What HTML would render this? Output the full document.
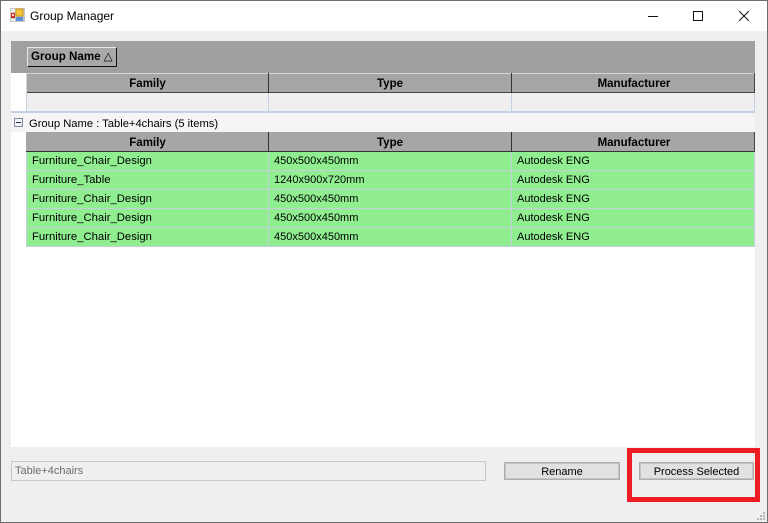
<!DOCTYPE html>
<html><head><meta charset="utf-8"><style>
html,body{margin:0;padding:0;width:768px;height:523px;overflow:hidden;background:#efefef}
*{box-sizing:border-box}
div,svg{position:absolute}
.t{font-family:"Liberation Sans",sans-serif;font-size:11px;color:#000;white-space:nowrap;line-height:18px}
.f{font-size:11.3px}
.h{font-weight:bold;font-size:11.5px;text-align:center;line-height:20px;color:#000}
.b{background:#e1e1e1;border:1px solid #adadad;box-shadow:inset 0 0 0 1px #c4c4c4;text-align:center;line-height:16px;padding-top:1px;font-family:"Liberation Sans",sans-serif;font-size:11px;color:#000}
</style></head><body>
<div style="left:0;top:0;width:768px;height:523px;background:#efefef"></div>
<div style="left:1px;top:1px;width:766px;height:30px;background:#fff"></div>
<svg style="left:10px;top:8px" width="15" height="15" viewBox="0 0 15 15">
<rect x="0" y="0" width="15" height="14" fill="#c9c9c9"/>
<rect x="1" y="1" width="4" height="3" fill="#eeeeee"/>
<rect x="1" y="5" width="4" height="5" fill="#c8322a"/><rect x="2" y="6" width="2" height="2" fill="#f3d6c8"/>
<rect x="1" y="11" width="4" height="2" fill="#eeeeee"/>
<rect x="6" y="1" width="7" height="7" fill="#f5c33b" stroke="#c99a20" stroke-width="1"/>
<rect x="6" y="9" width="7" height="4" fill="#5b8fd6"/>
</svg>
<div class="t" style="left:30px;top:7px;font-size:12px">Group Manager</div>
<svg style="left:640px;top:1px" width="125" height="30" viewBox="0 0 125 30" fill="none" stroke="#111" stroke-width="1">
<path d="M8 15.5H18"/><rect x="53.5" y="10.5" width="9" height="9"/><path d="M99 10L109 20M109 10L99 20"/>
</svg>
<!-- grid -->
<div style="left:11px;top:41px;width:744px;height:406px;background:#fff"></div>
<div style="left:11px;top:41px;width:744px;height:32px;background:#a0a0a0"></div>
<div class="t" style="left:27px;top:47px;width:90px;height:20px;background:#a8a8a8;border:1px solid;border-color:#e8e8e8 #111 #111 #e8e8e8;font-weight:bold;font-size:11.6px;line-height:18px;padding-left:3px">Group Name <span style="font-weight:normal">△</span></div>
<!-- header 1 -->
<div style="left:26px;top:73px;width:729px;height:20px;background:#a6a6a6;border-top:1px solid #d6d6d6;border-bottom:1px solid #444"></div>
<div style="left:26px;top:73px;width:1px;height:20px;background:#d6d6d6"></div>
<div style="left:268px;top:73px;width:1px;height:20px;background:#333"></div>
<div style="left:511px;top:73px;width:1px;height:20px;background:#333"></div>
<div style="left:754px;top:73px;width:1px;height:20px;background:#444"></div>
<div class="t h" style="left:27px;top:74px;width:241px">Family</div>
<div class="t h" style="left:269px;top:74px;width:242px">Type</div>
<div class="t h" style="left:513px;top:74px;width:242px">Manufacturer</div>
<!-- filter -->
<div style="left:26px;top:93px;width:729px;height:18px;background:#efefef"></div>
<div style="left:26px;top:93px;width:1px;height:18px;background:#c3d1e2"></div>
<div style="left:268px;top:93px;width:1px;height:18px;background:#c3d1e2"></div>
<div style="left:511px;top:93px;width:1px;height:18px;background:#c3d1e2"></div>
<div style="left:754px;top:93px;width:1px;height:18px;background:#c3d1e2"></div>
<div style="left:11px;top:111px;width:744px;height:2px;background:#c3d1e2"></div>
<!-- group row -->
<div style="left:11px;top:113px;width:744px;height:19px;background:#f5f5f5"></div>
<svg style="left:14px;top:118px" width="10" height="10" viewBox="0 0 10 10"><rect x=".5" y=".5" width="8" height="8" fill="#f3f3f3" stroke="#7f8a9c"/><path d="M2 4.5H7" stroke="#20304a"/></svg>
<div class="t" style="left:29px;top:114px;line-height:18px;font-size:11.2px;top:115px">Group Name : Table+4chairs (5 items)</div>
<!-- header 2 -->
<div style="left:26px;top:132px;width:729px;height:20px;background:#a6a6a6;border-bottom:1px solid #333"></div>
<div style="left:268px;top:132px;width:1px;height:20px;background:#333"></div>
<div style="left:511px;top:132px;width:1px;height:20px;background:#333"></div>
<div style="left:754px;top:132px;width:1px;height:20px;background:#444"></div>
<div class="t h" style="left:27px;top:133px;width:241px">Family</div>
<div class="t h" style="left:269px;top:133px;width:242px">Type</div>
<div class="t h" style="left:513px;top:133px;width:242px">Manufacturer</div>
<!-- rows -->
<div style="left:26px;top:152px;width:729px;height:95px;background:#90ee90;border-bottom:1px solid #c3cfdc"></div>
<div style="left:26px;top:170px;width:729px;height:1px;background:#c6cfdc"></div>
<div style="left:26px;top:189px;width:729px;height:1px;background:#c6cfdc"></div>
<div style="left:26px;top:208px;width:729px;height:1px;background:#c6cfdc"></div>
<div style="left:26px;top:227px;width:729px;height:1px;background:#c6cfdc"></div>
<div style="left:26px;top:152px;width:1px;height:95px;background:#c6cfdc"></div>
<div style="left:268px;top:152px;width:1px;height:95px;background:#c6cfdc"></div>
<div style="left:511px;top:152px;width:1px;height:95px;background:#c6cfdc"></div>
<div style="left:754px;top:152px;width:1px;height:95px;background:#c6cfdc"></div>
<div class="t f" style="left:32px;top:152px">Furniture_Chair_Design</div><div class="t" style="left:274px;top:152px">450x500x450mm</div><div class="t" style="left:517px;top:152px">Autodesk ENG</div>
<div class="t f" style="left:32px;top:171px">Furniture_Table</div><div class="t" style="left:274px;top:171px">1240x900x720mm</div><div class="t" style="left:517px;top:171px">Autodesk ENG</div>
<div class="t f" style="left:32px;top:190px">Furniture_Chair_Design</div><div class="t" style="left:274px;top:190px">450x500x450mm</div><div class="t" style="left:517px;top:190px">Autodesk ENG</div>
<div class="t f" style="left:32px;top:209px">Furniture_Chair_Design</div><div class="t" style="left:274px;top:209px">450x500x450mm</div><div class="t" style="left:517px;top:209px">Autodesk ENG</div>
<div class="t f" style="left:32px;top:228px">Furniture_Chair_Design</div><div class="t" style="left:274px;top:228px">450x500x450mm</div><div class="t" style="left:517px;top:228px">Autodesk ENG</div>
<!-- bottom -->
<div class="t" style="left:11px;top:461px;width:475px;height:20px;background:#efefef;border:1px solid #c8c8c8;color:#6d6d6d;padding-left:3px;line-height:18px;font-size:11px">Table+4chairs</div>
<div class="b" style="left:504px;top:462px;width:116px;height:18px">Rename</div>
<div style="left:627px;top:448px;width:133px;height:54px;border:5px solid #ed1c24"></div>
<div class="b" style="left:639px;top:462px;width:115px;height:18px">Process Selected</div>
<svg style="left:756px;top:511px" width="10" height="10" viewBox="0 0 10 10" fill="#b4b4b4"><rect x="7" y="1" width="2" height="2"/><rect x="4" y="4" width="2" height="2"/><rect x="7" y="4" width="2" height="2"/><rect x="1" y="7" width="2" height="2"/><rect x="4" y="7" width="2" height="2"/><rect x="7" y="7" width="2" height="2"/></svg>
<!-- window border -->
<div style="left:0;top:0;width:768px;height:523px;border:1px solid #6e6e6e"></div>
</body></html>
